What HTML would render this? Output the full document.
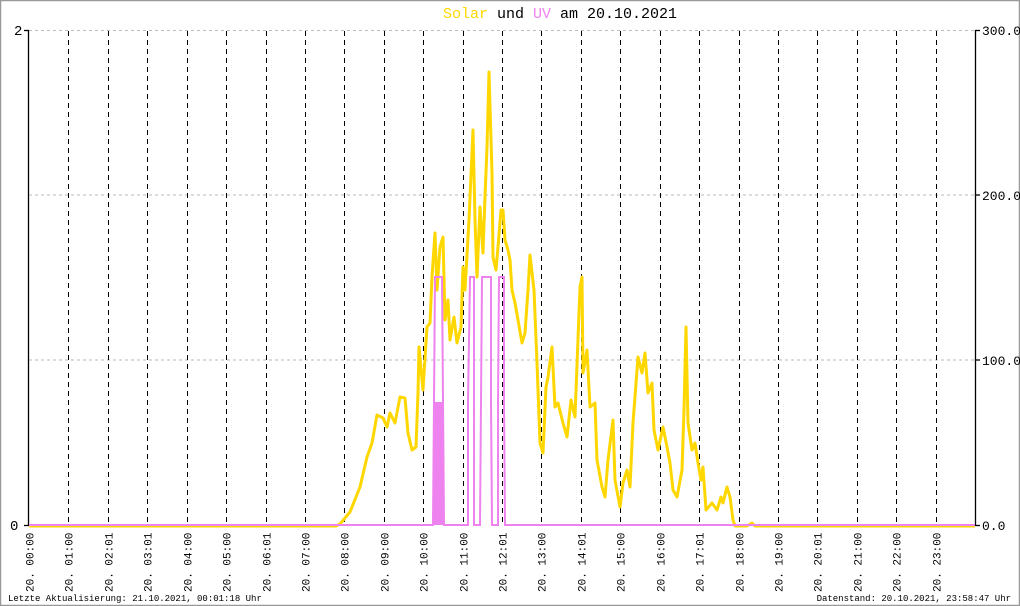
<!DOCTYPE html>
<html><head><meta charset="utf-8"><style>
html,body{margin:0;padding:0;background:#fff}
svg{display:block}
text{font-family:"Liberation Mono","DejaVu Sans Mono",monospace}
</style></head><body>
<svg width="1020" height="606" viewBox="0 0 1020 606" xmlns="http://www.w3.org/2000/svg">
<rect x="0.5" y="0.5" width="1019" height="605" fill="#fff" stroke="#999" stroke-width="1.5"/>
<text x="560" y="18" font-size="15" text-anchor="middle"><tspan fill="#ffd700">Solar</tspan><tspan fill="#000"> und </tspan><tspan fill="#ee82ee">UV</tspan><tspan fill="#000"> am 20.10.2021</tspan></text>
<g stroke="#bbb" stroke-dasharray="3,3" stroke-width="1">
<line x1="29" y1="195" x2="975" y2="195"/><line x1="29" y1="360" x2="975" y2="360"/><line x1="29" y1="30.5" x2="975" y2="30.5"/>
</g>
<g stroke="#000" stroke-dasharray="5,4" stroke-width="1" id="v"></g>
<g stroke="#000" stroke-width="1.3">
<line x1="28.5" y1="30" x2="28.5" y2="526"/><line x1="975.5" y1="30" x2="975.5" y2="526"/>
<line x1="24" y1="30.5" x2="29" y2="30.5"/><line x1="24" y1="525.5" x2="29" y2="525.5"/>
<line x1="975" y1="30.5" x2="980" y2="30.5"/><line x1="975" y1="195" x2="980" y2="195"/><line x1="975" y1="360" x2="980" y2="360"/><line x1="975" y1="525.5" x2="980" y2="525.5"/>
</g>
<text x="14" y="35" font-size="14">2</text>
<text x="10" y="530" font-size="14">0</text>
<text x="982" y="35" font-size="13">300.0</text>
<text x="982" y="200" font-size="13">200.0</text>
<text x="982" y="365" font-size="13">100.0</text>
<text x="982" y="530" font-size="13">0.0</text>
<polyline fill="none" stroke="#ffd700" stroke-width="3" stroke-linejoin="round" points="29,526 336,526 340,524 350,512 360,487 367,457 372,443 377,415 383,418 387,427 390,413 395,423 400,397 405,398 408,433 412,450 416,447 418,393 419,347 423,390 427,327 430,323 432,277 435,233 437,290 440,247 443,237 445,320 448,300 450,340 454,317 457,343 461,327 463,267 465,290 469,220 473,130 475,220 477,277 480,207 483,253 485,197 487,147 489,72 492,173 493,257 496,270 498,247 501,210 503,210 505,240 508,250 510,260 512,290 515,303 518,320 522,343 525,333 528,290 530,255 534,290 537,363 540,443 543,453 546,387 548,377 552,347 555,407 558,403 563,423 567,437 571,400 575,417 580,287 582,277 583,373 587,350 590,407 595,403 597,460 602,487 605,497 608,460 613,420 615,480 620,507 623,483 627,470 630,487 633,423 638,357 642,373 645,353 648,393 652,383 654,430 658,450 663,427 667,447 670,463 673,490 677,497 682,470 684,410 686,327 688,423 692,450 695,443 698,463 701,480 703,467 706,510 712,503 717,510 721,497 723,503 727,487 730,497 733,520 735,526 747,526 752,523 755,526 975,526"/>
<rect x="433" y="402" width="11" height="123" fill="#ee82ee"/>
<polyline fill="none" stroke="#ee82ee" stroke-width="2" points="29,525 433,525 435,277 442,277 444,525 468,525 468,402 470,277 474,277 474,525 480,525 481,402 482,277 491,277 491,402 492,525 498,525 498,402 499,277 504,277 504,402 505,525 975,525"/>
<g font-size="11" fill="#000" id="xl"></g>
<text x="8" y="601" font-size="9">Letzte Aktualisierung: 21.10.2021, 00:01:18 Uhr</text>
<text x="1011" y="601" font-size="9" text-anchor="end">Datenstand: 20.10.2021, 23:58:47 Uhr</text>
</svg>
<script>
var t=["00:00","01:00","02:01","03:01","04:00","05:00","06:01","07:00","08:00","09:00","10:00","11:00","12:01","13:00","14:01","15:00","16:00","17:01","18:00","19:00","20:01","21:00","22:00","23:00"];
var ns="http://www.w3.org/2000/svg",v=document.getElementById("v"),xl=document.getElementById("xl");
for(var i=0;i<24;i++){var x=Math.round(29+i*39.42)+0.5;
if(i>0){var l=document.createElementNS(ns,"line");l.setAttribute("x1",x);l.setAttribute("x2",x);l.setAttribute("y1",31);l.setAttribute("y2",525);v.appendChild(l);}
var s=document.createElementNS(ns,"text");s.setAttribute("transform","translate("+(x+4)+",592) rotate(-90)");s.textContent="20. "+t[i];xl.appendChild(s);}
</script>
</body></html>
